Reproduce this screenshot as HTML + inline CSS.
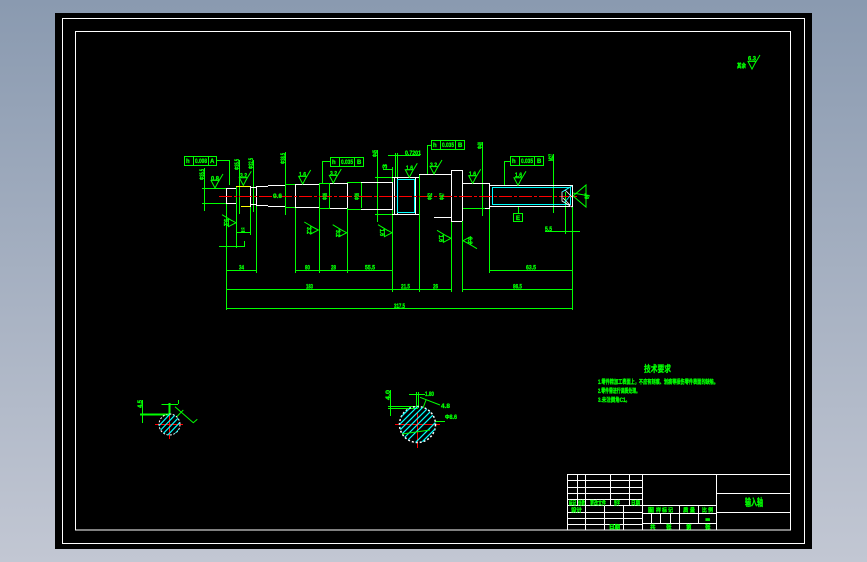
<!DOCTYPE html>
<html><head><meta charset="utf-8"><style>
html,body{margin:0;padding:0;width:867px;height:562px;overflow:hidden;background:linear-gradient(180deg,#8a9ab0 0%,#c2c7d3 100%)}
svg{position:absolute;left:0;top:0;display:block}
.w{stroke:#fff;fill:none}.g{stroke:#0f0;fill:none}.c{stroke:#0ff;fill:none}.r{stroke:#f00;fill:none}
text{fill:#0f0;stroke:#0f0;stroke-width:.3px;font-family:"Liberation Sans","Noto Sans CJK SC",sans-serif;font-weight:bold;font-size:6px}
</style></head><body>
<svg width="867" height="562" viewBox="0 0 867 562" xmlns="http://www.w3.org/2000/svg">
<defs>
<g id="ra" class="g"><path d="M-4-7.6H4L0 0ZM2-4 8-14" stroke-width="1"/></g>
<clipPath id="c1"><circle cx="169.5" cy="424.5" r="10.5"/></clipPath>
<clipPath id="c2"><circle cx="417.5" cy="424.5" r="18"/></clipPath>
</defs>
<rect x="55" y="13" width="757" height="536" fill="#000"/>
<g shape-rendering="crispEdges">
<rect class="w" x="62.5" y="18.5" width="742" height="525"/>
<rect class="w" x="75.5" y="31.5" width="715" height="498.5"/>
<!-- title block -->
<path class="w" d="M567.5 530V474.5H791M642.5 474.5V530M716.5 474.5V530M567.5 480.5H642M567.5 487.5H642M567.5 493.5H642M567.5 499.5H642M567.5 505.5H716M567.5 512.5H642M567.5 518.5H642M567.5 524.5H642M577.5 474.5V505M585.5 474.5V530M610.5 474.5V505M629.5 474.5V505M604.5 505.5V530M623.5 505.5V530M642.5 513.5H716M642.5 523.5H716M679.5 505.5V530M698.5 505.5V523M651.5 513.5V523M660.5 513.5V523M670.5 513.5V523M716.5 493.5H791M716.5 512.5H791"/>
<!-- green ext/dim -->
<path class="g" d="M226.5 188V310M256.5 187V273M295.5 184V273M319.5 184V273M347.5 182V273M392.5 167V292M419.5 174V292M451.5 170V292M462.5 183V292M489.5 208V273M572.5 206V310M226.5 270.5H256M295.5 270.5H392M489.5 270.5H572M226.5 289.5H451M462.5 289.5H572M226.5 308.5H572"/>
<path class="g" d="M204.5 168V211M202 188.5H226M202 203.5H226M239.5 160V214M253.5 160V212M236.5 186V248M250.5 186V235M236 232.5H250M219 246.5H245M244.5 241V246M229.5 160V185M217 160.5H229M285.5 152V215M377.5 150V222M322.5 161V183M322 161.5H330M285 184.5H295M285 207.5H295M329.5 183V208M319 183.5H330M319 208.5H330M347 182.5H361M347 209.5H361M361.5 182V208M375 177.5H392M375 214.5H392M383 169.5H392M395.5 153V177M397.5 153V177M388 155.5H420M427.5 145V174M427 145.5H432M482.5 142V216M553.5 154V213M504.5 161V185M504 161.5H510M565.5 192V234M545 231.5H580M518.5 207V213M462 183.5H490M462 208.5H490"/>
<rect class="g" x="184.5" y="156.5" width="32" height="9"/><path class="g" d="M193.5 156V165M208.5 156V165"/>
<rect class="g" x="330.5" y="157.5" width="33" height="9"/><path class="g" d="M339.5 157V166M354.5 157V166"/>
<rect class="g" x="431.5" y="140.5" width="33" height="9"/><path class="g" d="M440.5 140V149M455.5 140V149"/>
<rect class="g" x="510.5" y="156.5" width="33" height="9"/><path class="g" d="M519.5 156V165M534.5 156V165"/>
<rect class="g" x="513.5" y="213.5" width="9" height="8"/>
<!-- shaft -->
<path class="w" d="M226.5 188.5H236M226.5 203.5H236M226.5 188V204M250 187.5H256M250 204.5H256M256.5 186V206M256 186.5H268M256 205.5H268M268 185.5H285M268 206.5H285M295 184.5H319M295 207.5H319M295.5 184V208M330 183.5H347M330 208.5H347M347.5 183V208M361 182.5H392M361 209.5H392M392.5 182V210M392 177.5H419M392 214.5H419M397.5 177V214M394.5 177V214M415.5 177V214M419 174.5H451M434 217.5H451M451.5 170V221M462.5 170V221M451 170.5H462M451 221.5H462M462 183.5H490M485 208.5H490M489.5 183V208M490 185.5H572M490 206.5H570M572.5 185V207"/>
<path stroke="#ff0" fill="none" d="M236 186.5H250M241 206.5H250"/>
<path class="w" d="M250.5 186V207"/>
<rect class="c" x="397.5" y="179.5" width="17" height="33"/>
<rect class="c" x="492.5" y="187.5" width="78" height="17"/>
<path class="r" stroke-dasharray="13 2 3 2" stroke-width="1" d="M219 196.5H578"/>
<path class="r" d="M155 424.5H183M169.5 414V439M395 424.5H440M417.5 413V448"/>
<!-- section leaders -->
<path class="g" d="M142.5 400V423M161.5 404.5H178M178.5 400V404M390.5 390V416M388 406.5H418M388 408.5H418M409 394.5H425M416.5 392V408M418.5 392V408M435 421.5H445"/>
<path class="g" stroke-width="2" d="M140 414.5H170M169.5 403V415"/>
</g>
<!-- cone / chamfer -->
<path class="g" d="M573 196 586 185V207L573 196M573 193 590 196"/>
<path class="w" d="M572 186 562 192V201L572 207M565 190 572 197M563 198 570 205" stroke-width=".8"/>
<path class="c" d="M562 192 572 186M564 203 570 196" stroke-width=".8"/>
<path class="g" d="M175 406.7 193.3 422.7 197.3 419.3M176.7 416.7 183.3 410M420 397.3 440 405M426 400 423 408"/>
<!-- ra symbols -->
<use href="#ra" x="215" y="188"/><use href="#ra" x="243.3" y="185.3"/><use href="#ra" x="302.7" y="184"/><use href="#ra" x="333.3" y="183"/>
<use href="#ra" x="409.3" y="177.3"/><use href="#ra" x="434" y="174"/><use href="#ra" x="472.7" y="183.3"/><use href="#ra" x="518" y="185.3"/>
<use href="#ra" x="752" y="69"/>
<use href="#ra" transform="translate(236 222.7) rotate(-90)"/><use href="#ra" transform="translate(318.3 230) rotate(-90)"/><use href="#ra" transform="translate(346.7 232.7) rotate(-90)"/><use href="#ra" transform="translate(392 232.7) rotate(-90)"/><use href="#ra" transform="translate(451 238.3) rotate(-90)"/><use href="#ra" transform="translate(463 240.7) rotate(90)"/>
<!-- hatch -->
<circle cx="169.5" cy="424.5" r="10.5" fill="none" stroke="#fff" stroke-dasharray="2 1.5"/>
<g clip-path="url(#c1)"><path class="c" stroke-width="1.2" d="M155 430 170 414M155 436 176 414M159 438 182 414M165 438 184 418M171 438 184 424M177 438 186 428"/></g>
<circle cx="417.5" cy="424.5" r="18" fill="none" stroke="#fff" stroke-width="1.5" stroke-dasharray="2 2"/>
<g clip-path="url(#c2)"><path class="c" stroke-width="1.2" d="M398 420 414 404M398 426 420 404M398 432 426 404M398 438 432 404M402 440 438 404M408 440 438 410M414 444 438 420M420 444 438 426M426 444 438 432"/></g>
<path d="M160 414H168M402 434 430 430" stroke="#0f0" fill="none"/>
<!-- text -->
<text x="186" y="163">h</text><text x="195" y="163" textLength="12" lengthAdjust="spacingAndGlyphs">0.008</text><text x="210" y="163">A</text>
<text x="332" y="164">h</text><text x="341" y="164" textLength="12" lengthAdjust="spacingAndGlyphs">0.035</text><text x="357" y="164">B</text>
<text x="433" y="147">h</text><text x="442" y="147" textLength="12" lengthAdjust="spacingAndGlyphs">0.035</text><text x="458" y="147">B</text>
<text x="512" y="163">h</text><text x="521" y="163" textLength="12" lengthAdjust="spacingAndGlyphs">0.035</text><text x="537" y="163">B</text>
<text x="516" y="220">E</text>
<g>
<text x="211" y="180.5" textLength="8" lengthAdjust="spacingAndGlyphs">0.8</text>
<text x="240" y="177.5" textLength="7" lengthAdjust="spacingAndGlyphs">3.2</text>
<text x="299" y="176.5" textLength="7" lengthAdjust="spacingAndGlyphs">1.6</text>
<text x="330" y="175.5" textLength="7" lengthAdjust="spacingAndGlyphs">3.2</text>
<text x="406" y="170" textLength="7" lengthAdjust="spacingAndGlyphs">1.6</text>
<text x="430" y="167" textLength="7" lengthAdjust="spacingAndGlyphs">3.2</text>
<text x="469" y="176" textLength="7" lengthAdjust="spacingAndGlyphs">1.6</text>
<text x="515" y="177" textLength="7" lengthAdjust="spacingAndGlyphs">1.6</text>
<text x="748" y="60.5" textLength="8" lengthAdjust="spacingAndGlyphs">6.3</text>
<text x="737" y="68" textLength="9" lengthAdjust="spacingAndGlyphs">其余</text>
<text x="405" y="155" textLength="16" lengthAdjust="spacingAndGlyphs">0.7201</text>
<text x="241" y="232" textLength="4" lengthAdjust="spacingAndGlyphs">11</text>
<text x="239" y="269.5" textLength="5" lengthAdjust="spacingAndGlyphs">34</text>
<text x="305" y="269.5" textLength="5" lengthAdjust="spacingAndGlyphs">80</text>
<text x="331" y="269.5" textLength="5" lengthAdjust="spacingAndGlyphs">28</text>
<text x="365" y="269.5" textLength="10" lengthAdjust="spacingAndGlyphs">55.5</text>
<text x="306" y="288.5" textLength="7" lengthAdjust="spacingAndGlyphs">183</text>
<text x="401" y="288.5" textLength="9" lengthAdjust="spacingAndGlyphs">21.5</text>
<text x="433" y="288.5" textLength="5" lengthAdjust="spacingAndGlyphs">26</text>
<text x="526" y="269.5" textLength="10" lengthAdjust="spacingAndGlyphs">63.5</text>
<text x="513" y="288.5" textLength="9" lengthAdjust="spacingAndGlyphs">86.5</text>
<text x="394" y="308" textLength="11" lengthAdjust="spacingAndGlyphs">317.5</text>
<text x="545" y="231" textLength="7" lengthAdjust="spacingAndGlyphs">5.5</text>
<text x="273" y="198" textLength="9" lengthAdjust="spacingAndGlyphs">0.6</text>
</g>
<g>
<text transform="translate(204 180) rotate(-90)" textLength="11" lengthAdjust="spacingAndGlyphs">Φ35.5</text>
<text transform="translate(239 170) rotate(-90)" textLength="11" lengthAdjust="spacingAndGlyphs">Φ35.5</text>
<text transform="translate(253 169) rotate(-90)" textLength="11" lengthAdjust="spacingAndGlyphs">Φ32.5</text>
<text transform="translate(285 164) rotate(-90)" textLength="11" lengthAdjust="spacingAndGlyphs">Φ38.5</text>
<text transform="translate(377 157) rotate(-90)" textLength="7" lengthAdjust="spacingAndGlyphs">Φ45</text>
<text transform="translate(387 169) rotate(-90)" textLength="5" lengthAdjust="spacingAndGlyphs">3</text>
<text transform="translate(482 149) rotate(-90)" textLength="7" lengthAdjust="spacingAndGlyphs">Φ40</text>
<text transform="translate(553 161) rotate(-90)" textLength="7" lengthAdjust="spacingAndGlyphs">M27</text>
<text transform="translate(327 200) rotate(-90)" textLength="7" lengthAdjust="spacingAndGlyphs">Φ36</text>
<text transform="translate(359 200) rotate(-90)" textLength="7" lengthAdjust="spacingAndGlyphs">Φ36</text>
<text transform="translate(432 200) rotate(-90)" textLength="7" lengthAdjust="spacingAndGlyphs">Φ52</text>
<text transform="translate(444 200) rotate(-90)" textLength="7" lengthAdjust="spacingAndGlyphs">Φ47</text>
<text transform="translate(589 199) rotate(-90)" textLength="6" lengthAdjust="spacingAndGlyphs">60°</text>
<text transform="translate(224 219) rotate(90)" textLength="7" lengthAdjust="spacingAndGlyphs">3.2</text>
<text transform="translate(307 227) rotate(90)" textLength="7" lengthAdjust="spacingAndGlyphs">3.2</text>
<text transform="translate(336 230) rotate(90)" textLength="7" lengthAdjust="spacingAndGlyphs">3.2</text>
<text transform="translate(380 229) rotate(90)" textLength="7" lengthAdjust="spacingAndGlyphs">1.6</text>
<text transform="translate(439 235) rotate(90)" textLength="7" lengthAdjust="spacingAndGlyphs">1.6</text>
<text transform="translate(468 237) rotate(90)" textLength="7" lengthAdjust="spacingAndGlyphs">3.2</text>
<text transform="translate(142 408) rotate(-90)" textLength="8" lengthAdjust="spacingAndGlyphs">4.5</text>
<text transform="translate(390 400) rotate(-90)" textLength="10" lengthAdjust="spacingAndGlyphs">4.0</text>
</g>
<text x="425" y="396" textLength="9" lengthAdjust="spacingAndGlyphs">1.80</text>
<text x="441" y="408" textLength="9" lengthAdjust="spacingAndGlyphs">4.8</text>
<text x="445" y="419" textLength="12" lengthAdjust="spacingAndGlyphs">Φ8.6</text>
<!-- notes -->
<text x="644" y="372" style="font-size:9px" textLength="27" lengthAdjust="spacingAndGlyphs">技术要求</text>
<text x="598" y="384" textLength="120" lengthAdjust="spacingAndGlyphs">1.零件精加工表面上，不应有刻痕、划痕等损伤零件表面的缺陷。</text>
<text x="598" y="393" textLength="42" lengthAdjust="spacingAndGlyphs">2.零件需进行调质处理。</text>
<text x="598" y="402" textLength="32" lengthAdjust="spacingAndGlyphs">3.未注倒角C1。</text>
<!-- title block text -->
<text x="745" y="506" style="font-size:10px" textLength="18" lengthAdjust="spacingAndGlyphs">输入轴</text>
<g>
<text x="569" y="505" style="font-size:5.5px" textLength="7" lengthAdjust="spacingAndGlyphs">标记</text>
<text x="578" y="505" style="font-size:5.5px" textLength="7" lengthAdjust="spacingAndGlyphs">处数</text>
<text x="590" y="505" style="font-size:5.5px" textLength="16" lengthAdjust="spacingAndGlyphs">更改文件</text>
<text x="614" y="505" style="font-size:5.5px" textLength="6" lengthAdjust="spacingAndGlyphs">签字</text>
<text x="631" y="505" style="font-size:5.5px" textLength="9" lengthAdjust="spacingAndGlyphs">日期</text>
<text x="571" y="512" style="font-size:5.5px" textLength="11" lengthAdjust="spacingAndGlyphs">设计</text>
<text x="609" y="529" style="font-size:5.5px" textLength="11" lengthAdjust="spacingAndGlyphs">日期</text>
<text x="648" y="512" style="font-size:5.5px" textLength="6" lengthAdjust="spacingAndGlyphs">图</text><text x="656" y="512" style="font-size:5.5px" textLength="5" lengthAdjust="spacingAndGlyphs">样</text><text x="662" y="512" style="font-size:5.5px" textLength="5" lengthAdjust="spacingAndGlyphs">标</text><text x="668" y="512" style="font-size:5.5px" textLength="5" lengthAdjust="spacingAndGlyphs">记</text>
<text x="683" y="512" style="font-size:5.5px" textLength="12" lengthAdjust="spacingAndGlyphs">质 量</text>
<text x="702" y="512" style="font-size:5.5px" textLength="11" lengthAdjust="spacingAndGlyphs">比 例</text>
<text x="705" y="521" style="font-size:5px" textLength="5" lengthAdjust="spacingAndGlyphs">■</text>
<text x="650" y="529" style="font-size:5.5px">共</text><text x="666" y="529" style="font-size:5.5px">张</text><text x="686" y="529" style="font-size:5.5px">第</text><text x="705" y="529" style="font-size:5.5px">张</text>
</g>
</svg>
</body></html>
